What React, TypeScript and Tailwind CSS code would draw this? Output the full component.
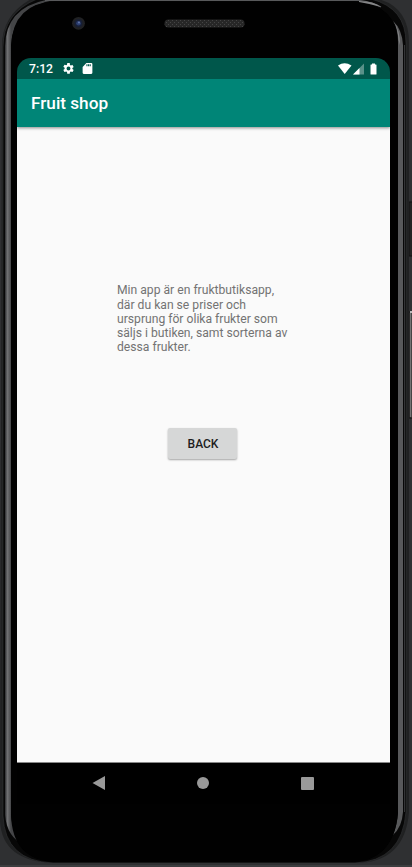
import React from "react";

function PhoneShell() {
  return (
    <svg className="absolute inset-0 h-[867px] w-[412px]" viewBox="0 0 412 867" aria-hidden="true">
      <defs>
        <linearGradient id="rimLeft" gradientUnits="userSpaceOnUse" x1="5" x2="11" y1="0" y2="0">
          <stop offset="0" stopColor="#2c2d2f" />
          <stop offset="0.4" stopColor="#707173" />
          <stop offset="0.7" stopColor="#5c5d5f" />
          <stop offset="1" stopColor="#444547" />
        </linearGradient>
        <pattern id="mesh" width="4" height="4" patternUnits="userSpaceOnUse">
          <rect width="4" height="4" fill="#272727" />
          <path d="M0 0h1v1H0zM2 2h1v1H2z" fill="#454545" />
        </pattern>
      </defs>
      <rect width="412" height="867" fill="#2f3032" />
      <rect y="865" width="412" height="2" fill="#3c3d3f" />
      <rect x="409" y="202" width="4" height="54" fill="#242424" stroke="#111" />
      <rect x="409" y="312" width="4" height="106" fill="#454545" stroke="#111" />
      <path d="M410.500 312v105" stroke="#747474" />
      <path d="M410 312h2" stroke="#bbb" strokeWidth="2" />
      <path d="M2 46Q2 14 33-2H373Q409 4 409 43V812Q405 863 355 863H53Q2 861 0 821Z" fill="#202122" />
      <path d="M3 47Q3 13 37-1H371Q406 8 406 43V812Q402 861 355 863H53Q5 861 3 816Z" fill="#070707" stroke="#343537" strokeWidth=".6" />
      <path d="M404.500 45V812" stroke="#343537" />
      <path d="M5 46Q6 8 46 0L54 0Q13 7 11 46V815Q12 833 24 845Q7 837 5 815Z" fill="url(#rimLeft)" />
      <path d="M393 21Q398 28 398 43V813Q397 826 393 835Q402 827 403 812V45Q402 29 393 21Z" fill="#58595b" />
      <path d="M45 .5H360Q372 2 381 7" fill="none" stroke="#58595b" strokeWidth="1.2" />
      <path d="M11 46Q13 3 55 1.500H354Q398 4 398 45V812Q394 862 350 862H56Q12 861 11 814Z" fill="#010101" />
      <path d="M359 1Q374 1 381 7Q371 4 359 2Z" fill="#858687" />
      <path d="M393.500 21Q398 28 398.500 40L400 45Q400 30 393.500 21Z" fill="#858687" />
      <rect x="164.500" y="19.500" width="80" height="8" rx="4" fill="url(#mesh)" />
      <circle cx="78.5" cy="23.3" r="6.4" fill="#202123" />
      <circle cx="78.5" cy="23.3" r="4" fill="#171f35" />
      <circle cx="78.5" cy="23.3" r="2.3" fill="#2c3e70" />
      <circle cx="79" cy="22.6" r="1" fill="#6176a9" />
    </svg>
  );
}

function StatusBar() {
  return (
    <div className="relative z-20 flex h-[21px] shrink-0 items-center bg-[#00574b] pl-3 text-white">
      <span className="w-[33px] pt-[2px] text-[12.200px] leading-none font-medium">7:12</span>
      <svg className="h-[13px] w-[13px]" viewBox="0 0 24 24" fill="currentColor" aria-hidden="true">
        <path d="M19.14 12.94c.04-.3.06-.61.06-.94s-.02-.64-.07-.94l2.03-1.58a.49.49 0 0 0 .12-.61l-1.92-3.32a.49.49 0 0 0-.59-.22l-2.39.96a7 7 0 0 0-1.62-.94l-.36-2.54A.48.48 0 0 0 13.92 2h-3.84a.48.48 0 0 0-.48.41l-.36 2.54a7 7 0 0 0-1.62.94l-2.39-.96a.48.48 0 0 0-.59.22L2.73 8.47a.48.48 0 0 0 .12.61l2.03 1.58a8 8 0 0 0 0 2.28l-2.03 1.58a.49.49 0 0 0-.12.61l1.92 3.32c.12.22.37.29.59.22l2.39-.96c.5.38 1.03.7 1.62.94l.36 2.54c.05.24.24.41.48.41h3.84c.24 0 .44-.17.47-.41l.36-2.54a7 7 0 0 0 1.62-.94l2.39.96c.22.08.47 0 .59-.22l1.92-3.32a.48.48 0 0 0-.12-.61zM12 15.6A3.6 3.6 0 1 1 12 8.4a3.6 3.6 0 0 1 0 7.2z" />
      </svg>
      <svg className="ml-[6px] h-[13px] w-[13px]" viewBox="0 0 24 24" fill="currentColor" aria-hidden="true">
        <path d="M19 2h-9L3 9v11q0 2 2 2h14q2 0 2-2V4q0-2-2-2zm-7 6h-2V4h2zm3 0h-2V4h2zm3 0h-2V4h2z" />
      </svg>
      <svg className="mr-[13px] ml-auto h-3 w-[39px]" viewBox="0 0 39 12" fill="currentColor" aria-hidden="true">
        <path d="M0 2.500Q6.500-2.200 13.500 2.500L6.700 11Z" />
        <path d="M26 .5V11.500H15Z" fillOpacity=".35" />
        <path d="M21.500 5V11.500H15Z" />
        <path d="M34 1.500V.5h3v1h1q.5 0 .5 .5v9q0 .5-.5 .5h-5q-.5 0-.5-.5V2q0-.5.5-.5z" />
      </svg>
    </div>
  );
}

function NavigationBar() {
  return (
    <nav className="flex h-[42px] shrink-0 items-center justify-between border-t border-[#888] bg-black pr-[76px] pb-px pl-[75px] text-[#999]">
      <button aria-label="Previous">
        <svg className="h-[14px] w-[13px]" viewBox="0 0 13 14"><path d="M.5 7 13 0v14z" fill="currentColor" /></svg>
      </button>
      <button aria-label="Home" className="h-3 w-3 rounded-full bg-[#999]" />
      <button aria-label="Overview" className="h-[13px] w-[13px] rounded-[1px] bg-[#999]" />
    </nav>
  );
}

export default function App() {
  return (
    <div className="relative h-[867px] w-[412px] overflow-hidden font-['Roboto',sans-serif]">
      <PhoneShell />
      <div className="relative pt-[58px] pl-[17px]">
        <div className="flex h-[746px] w-[373px] flex-col overflow-hidden rounded-t-[14px] bg-black">
          <StatusBar />
          <header className="z-10 flex h-12 shrink-0 items-center bg-[#008577] pt-[2px] pl-[14px] text-white shadow-[0_1px_3px_rgba(0,0,0,0.45)]">
            <h1 className="text-[17.200px] font-medium">Fruit shop</h1>
          </header>
          <main className="flex grow flex-col items-start bg-[#fafafa] pt-[156.400px] pl-[100px]">
            <p className="w-[180px] text-[12.150px] leading-[14.200px] text-[#737373]">
              Min app är en fruktbutiksapp,<br />där du kan se priser och<br />ursprung för olika frukter som<br />säljs i butiken, samt sorterna av<br />dessa frukter.
            </p>
            <button className="mt-[73.600px] ml-[51px] flex h-[31px] w-[69px] items-center justify-center rounded-[2px] bg-[#d6d7d7] pl-px text-[12px] font-medium text-[#1d1d1d] shadow-[0_1px_2px_rgba(0,0,0,0.35)]">BACK</button>
          </main>
          <NavigationBar />
        </div>
      </div>
    </div>
  );
}
